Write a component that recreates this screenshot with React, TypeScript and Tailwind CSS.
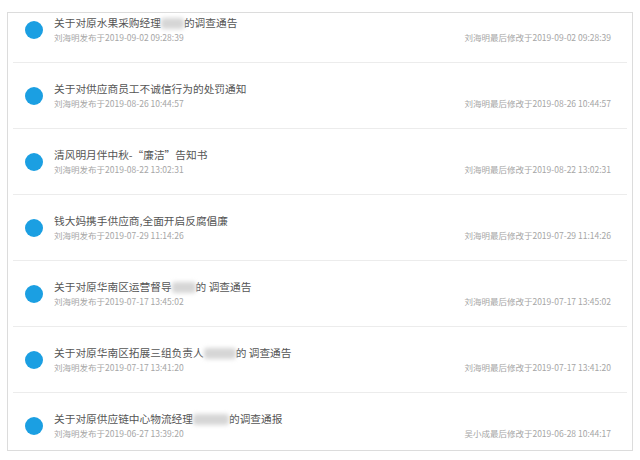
interface Notice {
  before: string
  blur?: number
  after?: string
  publisher: string
  published: string
  editor: string
  edited: string
}

const notices: Notice[] = [
  { before: "关于对原水果采购经理", blur: 23, after: "的调查通告", publisher: "刘海明", published: "2019-09-02 09:28:39", editor: "刘海明", edited: "2019-09-02 09:28:39" },
  { before: "关于对供应商员工不诚信行为的处罚通知", publisher: "刘海明", published: "2019-08-26 10:44:57", editor: "刘海明", edited: "2019-08-26 10:44:57" },
  { before: "清风明月伴中秋-“廉洁”告知书", publisher: "刘海明", published: "2019-08-22 13:02:31", editor: "刘海明", edited: "2019-08-22 13:02:31" },
  { before: "钱大妈携手供应商,全面开启反腐倡廉", publisher: "刘海明", published: "2019-07-29 11:14:26", editor: "刘海明", edited: "2019-07-29 11:14:26" },
  { before: "关于对原华南区运营督导", blur: 24, after: "的 调查通告", publisher: "刘海明", published: "2019-07-17 13:45:02", editor: "刘海明", edited: "2019-07-17 13:45:02" },
  { before: "关于对原华南区拓展三组负责人", blur: 32, after: "的 调查通告", publisher: "刘海明", published: "2019-07-17 13:41:20", editor: "刘海明", edited: "2019-07-17 13:41:20" },
  { before: "关于对原供应链中心物流经理", blur: 36, after: "的调查通报", publisher: "刘海明", published: "2019-06-27 13:39:20", editor: "吴小成", edited: "2019-06-28 10:44:17" },
]

export default function App() {
  return (
    <div
      className="w-[640px] h-[460px] bg-white pt-[12px] pl-[7px]"
      style={{ fontFamily: '"Noto Sans CJK SC", "Noto Sans", sans-serif' }}
    >
      {/* Notice list card */}
      <div className="w-[626px] h-[439px] border border-[#dcdcdc] bg-white">
        {notices.map((n, i) => {
          const first = i === 0
          const last = i === notices.length - 1
          return (
            <div key={i}>
              {!first && <div className="mx-[5px] h-px bg-[#ececec]" />}
              <div
                className={
                  "flex items-center pl-[17px] pr-[21px] " +
                  (first ? "pt-[3px] pb-[19px]" : last ? "pt-[19px] pb-[11px]" : "pt-[19px] pb-[19px]")
                }
              >
                <div className="w-[18px] h-[18px] rounded-full bg-[#1b9fe2] shrink-0" />
                <div className="ml-[11px] flex-1">
                  <div className="text-[10.7px] leading-[14px] text-[#555] whitespace-nowrap flex items-center">
                    <span>{n.before}</span>
                    {n.blur && (
                      <span
                        className="inline-block h-[11px] rounded-[3px] bg-[#d6d6d6] blur-[2px]"
                        style={{ width: n.blur }}
                      />
                    )}
                    {n.after && <span>{n.after}</span>}
                  </div>
                  <div className="mt-px flex justify-between text-[8.5px] leading-[12px] text-[#a6a6a6] whitespace-nowrap">
                    <span>{n.publisher}发布于{n.published}</span>
                    <span>{n.editor}最后修改于{n.edited}</span>
                  </div>
                </div>
              </div>
            </div>
          )
        })}
      </div>
    </div>
  )
}
